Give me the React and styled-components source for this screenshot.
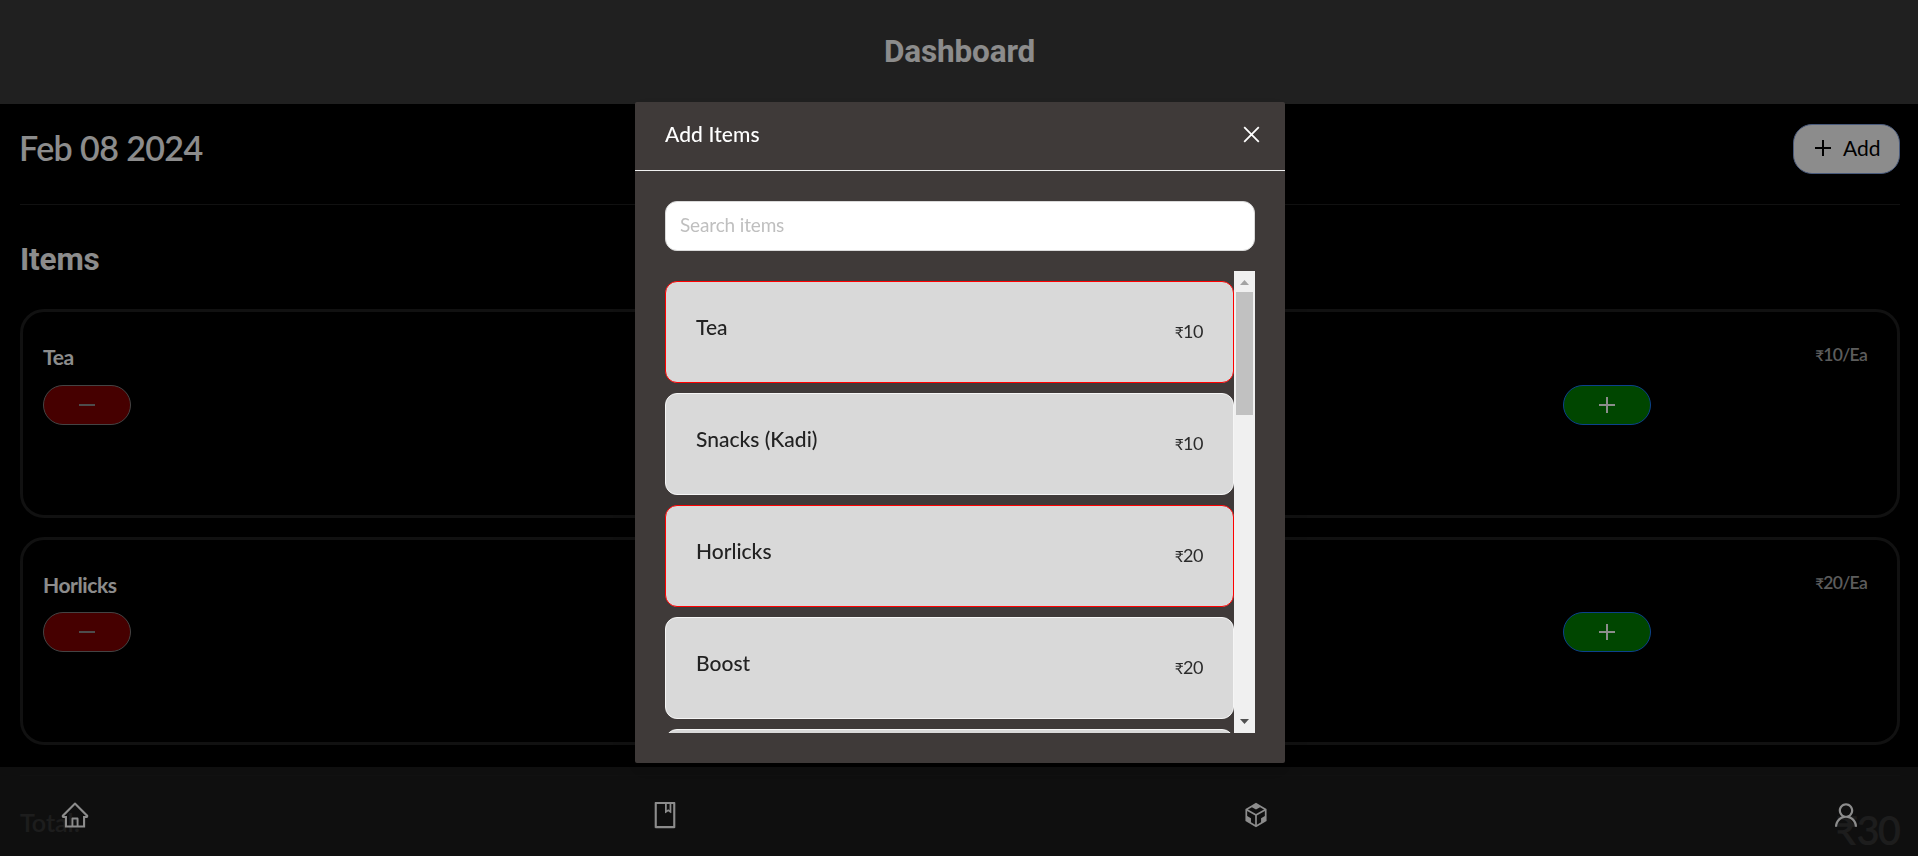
import React from 'react';
import styled, { createGlobalStyle } from 'styled-components';
import {
  AiOutlineHome,
  AiOutlineBook,
  AiOutlineCodeSandbox,
  AiOutlineUser,
} from 'react-icons/ai';

const GlobalStyle = createGlobalStyle`
  *, *::before, *::after { box-sizing: border-box; }
  body {
    margin: 0;
    background: #000;
    font-family: Lato, "Liberation Sans", sans-serif;
    overflow: hidden;
  }
  button { font-family: inherit; padding: 0; cursor: pointer; }
`;

const Page = styled.div`
  height: 100vh;
  overflow: hidden;
  background: #000;
  color: #fff;
`;

const Header = styled.header`
  display: flex;
  align-items: center;
  justify-content: center;
  height: 104px;
  padding-left: 1px;
  background: #3b3b3b;
`;

const Heading = styled.h1`
  margin: 0;
  font-family: Roboto, sans-serif;
  font-size: 31.5px;
  line-height: 38px;
  font-weight: 700;
  letter-spacing: -0.15px;
`;

const Content = styled.main`
  padding: 20px 18px 0 20px;
`;

const TitleBar = styled.div`
  display: flex;
  align-items: center;
  justify-content: space-between;
  height: 50px;
`;

const DateText = styled.div`
  padding-bottom: 3px;
  margin-left: -1px;
  font-size: 34px;
  font-weight: 600;
  letter-spacing: -0.6px;
`;

const AddButton = styled.button`
  display: flex;
  align-items: center;
  gap: 12px;
  width: 107px;
  height: 50px;
  padding: 0 0 2px 21px;
  border: 1px solid #86a4e0;
  border-radius: 19px;
  background: #fff;
  color: #000;
  font-size: 21px;
`;

const AddLabel = styled.span`
  padding-bottom: 1px;
`;

const Divider = styled.hr`
  height: 1px;
  margin: ${(p) => p.$gap}px 0 0;
  border: 0;
  background: #1f1f1f;
`;

const SectionTitle = styled(Heading)`
  margin: 36px 0 0 0;
`;

const CardList = styled.div`
  display: flex;
  flex-direction: column;
  gap: 19px;
  margin-top: 30px;
`;

const Card = styled.section`
  height: 208.6px;
  padding: 32px 30px 0 20px;
  border: 3px solid #1f1f1f;
  border-radius: 24px;
`;

const CardTop = styled.div`
  display: flex;
  align-items: flex-start;
  justify-content: space-between;
  line-height: 26px;
`;

const CardName = styled.div`
  font-size: 21px;
  font-weight: 700;
  letter-spacing: -0.4px;
`;

const CardPrice = styled.div`
  margin-top: -2px;
  color: #a8a8a8;
  font-size: 17.5px;
  font-weight: 600;
  letter-spacing: -0.7px;
`;

const Rupee = styled.span`
  font-size: 0.86em;
`;

const Stepper = styled.div`
  display: grid;
  grid-template-columns: 5fr 1fr;
  margin-top: 14.8px;
`;

const StepButton = styled.button`
  display: flex;
  align-items: center;
  justify-content: center;
  width: 88px;
  height: 40px;
  border: 1px solid ${(p) => (p.$add ? '#1677ff' : '#7c7c7c')};
  border-radius: 20px;
  background: ${(p) => (p.$add ? '#008000' : '#800000')};
  color: ${(p) => (p.$add ? '#fff' : '#8c8c8c')};
`;

const Total = styled.div`
  display: flex;
  align-items: flex-start;
  justify-content: space-between;
  margin-top: 30px;
`;

const TotalLabel = styled.div`
  font-size: 25px;
  line-height: 32px;
  font-weight: 600;
`;

const TotalValue = styled.div`
  margin-right: 1px;
  font-size: 40px;
  line-height: 49px;
  font-weight: 600;
  letter-spacing: -2px;
`;

const NavBar = styled.nav`
  position: fixed;
  left: 0;
  right: 0;
  bottom: 0;
  display: flex;
  justify-content: space-between;
  height: 89px;
  padding: 33px 57px 0 60px;
  background: rgba(31, 31, 31, 0.9);
  color: #fff;
  font-size: 30px;
`;

const Overlay = styled.div`
  position: fixed;
  inset: 0;
  display: flex;
  align-items: flex-start;
  justify-content: center;
  padding: 102px 0 0 2px;
  background: rgba(0, 0, 0, 0.45);
`;

const Modal = styled.div`
  width: 650px;
  height: 661px;
  border-radius: 2px;
  background: #3f3a39;
  box-shadow: 0 3px 6px -4px rgba(0, 0, 0, 0.12), 0 6px 16px 0 rgba(0, 0, 0, 0.08),
    0 9px 28px 8px rgba(0, 0, 0, 0.05);
`;

const ModalHeader = styled.div`
  display: flex;
  align-items: center;
  justify-content: space-between;
  height: 69px;
  padding: 0 25.5px 3px 30px;
  border-bottom: 1px solid #f0f0f0;
  color: #fff;
  font-size: 21px;
  font-weight: 500;
  letter-spacing: 0.1px;
`;

const ModalTitle = styled.div`
  padding-bottom: 2px;
`;

const CloseButton = styled.button`
  display: flex;
  border: 0;
  background: none;
  color: #fff;
`;

const ModalBody = styled.div`
  padding: 30px;
`;

const SearchInput = styled.input`
  display: block;
  width: 100%;
  height: 50px;
  padding: 0 14px 3px;
  border: 1px solid #d9d9d9;
  border-radius: 12px;
  outline: none;
  background: #fff;
  font-family: inherit;
  font-size: 19px;
  letter-spacing: -0.15px;
  &::placeholder { color: #bfbfbf; }
`;

const ListFrame = styled.div`
  display: flex;
  height: 462px;
  margin-top: 20px;
`;

const List = styled.div`
  flex: 1;
  height: 100%;
  padding-top: 10px;
  overflow: hidden;
`;

const ListItem = styled.div`
  display: flex;
  justify-content: space-between;
  height: 102px;
  margin-bottom: 10px;
  padding: 32px 30px 0;
  border: 1px solid ${(p) => (p.$selected ? '#ff0000' : '#f5f5f5')};
  border-radius: 12px;
  background: #d9d9d9;
  line-height: 26px;
`;

const ItemName = styled.div`
  color: #222;
  font-size: 21px;
  font-weight: 500;
`;

const ItemPrice = styled.div`
  margin-top: 4px;
  color: #2b2b2b;
  font-size: 18px;
  letter-spacing: -0.5px;
`;

const ScrollTrack = styled.div`
  display: flex;
  flex-direction: column;
  align-items: center;
  width: 21px;
  background: #f0f0f0;
`;

const ScrollArrow = styled.div`
  display: flex;
  align-items: center;
  justify-content: center;
  height: 21px;
  padding: ${(p) => (p.$disabled ? '2px 0 0' : '0 0 2px')};
  color: ${(p) => (p.$disabled ? '#a3a3a3' : '#505050')};
`;

const ScrollThumb = styled.div`
  width: 17px;
  height: 123px;
  margin-bottom: auto;
  background: #c1c1c1;
`;

const PlusIcon = () => (
  <svg width="16" height="16" viewBox="0 0 16 16" fill="currentColor">
    <path d="M7 0h2v16H7zM0 7h16v2H0z" />
  </svg>
);

const MinusIcon = () => (
  <svg width="16" height="16" viewBox="0 0 16 16" fill="currentColor">
    <path d="M0 7h16v2H0z" />
  </svg>
);

const CloseIcon = () => (
  <svg width="17" height="17" viewBox="0 0 17 17" fill="none" stroke="currentColor" strokeWidth="1.8">
    <path d="M1.2 1.2l14.6 14.6M15.8 1.2L1.2 15.8" />
  </svg>
);

const Arrow = ({ down }) => (
  <svg width="9" height="5" viewBox="0 0 9 5" fill="currentColor">
    <path d={down ? 'M0 0h9L4.5 5z' : 'M0 5h9L4.5 0z'} />
  </svg>
);

const cart = [
  { name: 'Tea', price: 10 },
  { name: 'Horlicks', price: 20 },
];

const catalogue = [
  { name: 'Tea', price: 10, selected: true },
  { name: 'Snacks (Kadi)', price: 10 },
  { name: 'Horlicks', price: 20, selected: true },
  { name: 'Boost', price: 20 },
  { name: '', price: null },
];

export default function App() {
  return (
    <>
      <GlobalStyle />
      <Page>
        <Header>
          <Heading>Dashboard</Heading>
        </Header>
        <Content>
          <TitleBar>
            <DateText>Feb 08 2024</DateText>
            <AddButton>
              <PlusIcon />
              <AddLabel>Add</AddLabel>
            </AddButton>
          </TitleBar>
          <Divider $gap={30} />
          <SectionTitle as="h2">Items</SectionTitle>
          <CardList>
            {cart.map((item) => (
              <Card key={item.name}>
                <CardTop>
                  <CardName>{item.name}</CardName>
                  <CardPrice>
                    <Rupee>₹</Rupee>
                    {item.price}/Ea
                  </CardPrice>
                </CardTop>
                <Stepper>
                  <StepButton aria-label="Remove one">
                    <MinusIcon />
                  </StepButton>
                  <StepButton $add aria-label="Add one">
                    <PlusIcon />
                  </StepButton>
                </Stepper>
              </Card>
            ))}
          </CardList>
          <Divider $gap={30} />
          <Total>
            <TotalLabel>Total:</TotalLabel>
            <TotalValue>₹30</TotalValue>
          </Total>
        </Content>
        <NavBar>
          <AiOutlineHome />
          <AiOutlineBook />
          <AiOutlineCodeSandbox />
          <AiOutlineUser />
        </NavBar>
      </Page>
      <Overlay>
        <Modal role="dialog" aria-label="Add Items">
          <ModalHeader>
            <ModalTitle>Add Items</ModalTitle>
            <CloseButton aria-label="Close">
              <CloseIcon />
            </CloseButton>
          </ModalHeader>
          <ModalBody>
            <SearchInput placeholder="Search items" />
            <ListFrame>
              <List>
                {catalogue.map((item, i) => (
                  <ListItem key={i} $selected={item.selected}>
                    <ItemName>{item.name}</ItemName>
                    {item.price !== null && (
                      <ItemPrice>
                        <Rupee>₹</Rupee>
                        {item.price}
                      </ItemPrice>
                    )}
                  </ListItem>
                ))}
              </List>
              <ScrollTrack>
                <ScrollArrow $disabled>
                  <Arrow />
                </ScrollArrow>
                <ScrollThumb />
                <ScrollArrow>
                  <Arrow down />
                </ScrollArrow>
              </ScrollTrack>
            </ListFrame>
          </ModalBody>
        </Modal>
      </Overlay>
    </>
  );
}
